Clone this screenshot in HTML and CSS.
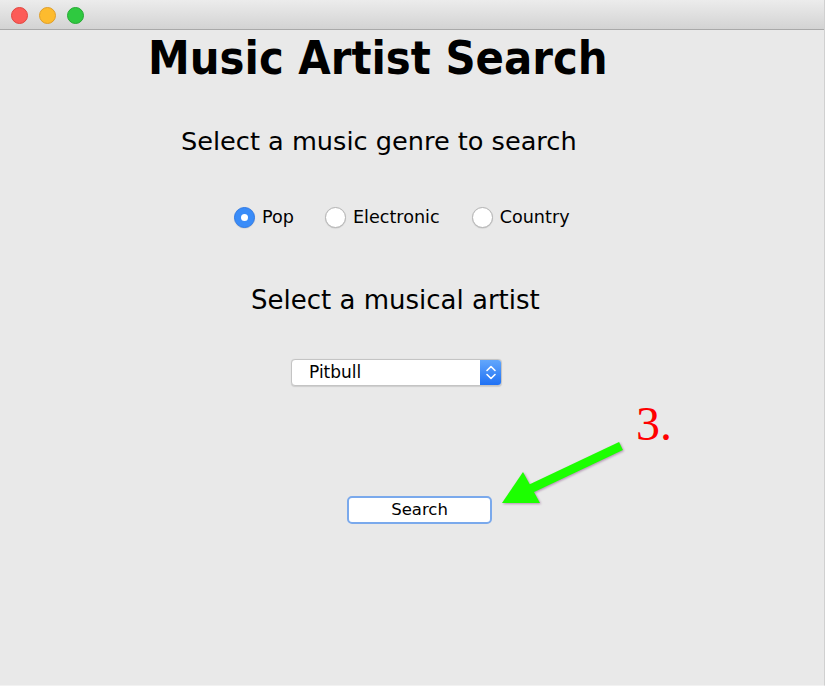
FILE: index.html
```html
<!DOCTYPE html>
<html lang="en">
<head>
<meta charset="utf-8">
<title>Music Artist Search</title>
<link rel="stylesheet" href="styles.css">
</head>
<body>
<div class="window">
  <div class="titlebar">
    <span class="light red"></span>
    <span class="light yellow"></span>
    <span class="light green"></span>
  </div>
  <div class="content">
    <div class="row title-row"><h1 class="title">Music Artist Search</h1></div>
    <div class="row genre-row"><p class="label">Select a music genre to search</p></div>
    <div class="row radio-row">
      <label class="radio"><span class="dot checked"></span><span class="rtext">Pop</span></label>
      <label class="radio"><span class="dot"></span><span class="rtext">Electronic</span></label>
      <label class="radio"><span class="dot"></span><span class="rtext">Country</span></label>
    </div>
    <div class="row artist-row"><p class="label">Select a musical artist</p></div>
    <div class="row combo-row">
      <div class="combo">
        <span class="combo-text">Pitbull</span>
        <span class="combo-btn">
          <svg width="22" height="27" viewBox="0 0 22 27"><path d="M7 11.5 L11 7.5 L15 11.5 M7 15.5 L11 19.5 L15 15.5" fill="none" stroke="#fff" stroke-width="1.6" stroke-linecap="round" stroke-linejoin="round"/></svg>
        </span>
      </div>
    </div>
    <div class="row button-row"><button class="search-btn">Search</button></div>
  </div>
  <svg class="arrow" width="825" height="686" viewBox="0 0 825 686">
    <g class="arrow-g">
      <line x1="621" y1="446" x2="528" y2="490" stroke="#1cff00" stroke-width="9"/>
      <polygon points="502,503 523,472 540,503" fill="#1cff00"/>
    </g>
  </svg>
  <div class="step">3.</div>
</div>
</body>
</html>
```
FILE: styles.css
```css
html, body {
  margin: 0;
  padding: 0;
}
body {
  width: 825px;
  height: 686px;
  overflow: hidden;
  background: #e8e8e8;
  font-family: "DejaVu Sans", "Noto Sans", sans-serif;
  color: #000;
}
.window {
  position: relative;
  width: 824px;
  height: 685px;
  border-right: 1px solid #d0d0d0;
  border-bottom: 1px solid #f2f2f2;
  background: #e9e9e9;
}
.titlebar {
  height: 29px;
  border-bottom: 1px solid #a9a9a9;
  background: linear-gradient(#ececec, #d3d3d3);
  display: flex;
  align-items: center;
  gap: 11px;
  padding-left: 11px;
  box-sizing: content-box;
}
.light {
  width: 15px;
  height: 15px;
  border-radius: 50%;
  display: block;
  margin-top: 1px;
}
.red { background: #fc5b57; border: 1px solid #e1463f; }
.yellow { background: #fdbb2e; border: 1px solid #df9e2a; }
.green { background: #2fc940; border: 1px solid #25a934; }

.content {
  display: flex;
  flex-direction: column;
}
.row {
  display: flex;
  align-items: center;
}
.title-row { margin-top: 5px; padding-left: 148px; }
.title {
  margin: 0;
  font-family: "DejaVu Sans Condensed", "DejaVu Sans", sans-serif;
  font-weight: bold;
  font-size: 46.6px;
  line-height: 46px;
  white-space: nowrap;
}
.label {
  margin: 0;
  font-size: 26px;
  line-height: 26px;
  white-space: nowrap;
}
.genre-row { margin-top: 47px; padding-left: 181px; }
.genre-row .label { font-size: 25.6px; }
.radio-row { margin-top: 52px; padding-left: 234px; height: 22px; }
.radio {
  display: flex;
  align-items: center;
  gap: 7px;
  margin-right: 31px;
}
.radio:nth-child(2) { margin-right: 32px; }
.radio:last-child { margin-right: 0; }
.dot {
  box-sizing: border-box;
  width: 21px;
  height: 21px;
  border-radius: 50%;
  background: #fff;
  border: 1px solid #b4b4b4;
  box-shadow: 0 0.5px 1px rgba(0,0,0,0.15);
  display: flex;
  align-items: center;
  justify-content: center;
}
.dot.checked {
  background: #3a8cf8;
  border-color: #2f7be8;
}
.dot.checked::after {
  content: "";
  width: 7px;
  height: 7px;
  border-radius: 50%;
  background: #fff;
}
.rtext {
  font-size: 17.6px;
  line-height: 20px;
}
.artist-row { margin-top: 59px; padding-left: 251px; }
.combo-row { margin-top: 46px; padding-left: 291px; }
.combo {
  box-sizing: border-box;
  width: 211px;
  height: 27px;
  display: flex;
  align-items: center;
  background: #fff;
  border: 1px solid #c4c4c4;
  border-radius: 4px;
  box-shadow: 0 0.5px 1px rgba(0,0,0,0.12);
  overflow: hidden;
}
.combo-text {
  flex: 1;
  padding-left: 17px;
  font-size: 17px;
  line-height: 25px;
}
.combo-btn {
  width: 22px;
  height: 27px;
  margin-right: -1px;
  display: flex;
  background: linear-gradient(#65a9fc, #1d6ff4);
}
.button-row { margin-top: 110px; padding-left: 347px; }
.search-btn {
  box-sizing: border-box;
  width: 145px;
  height: 28px;
  margin: 0;
  padding: 0;
  background: #fff;
  border: 2px solid #7aa9ec;
  border-radius: 5px;
  font-family: "DejaVu Sans", sans-serif;
  font-size: 16.5px;
  color: #000;
  line-height: 24px;
}
.arrow {
  position: absolute;
  left: 0;
  top: 0;
  pointer-events: none;
}
.arrow-g {
  filter: drop-shadow(1px 1px 1px rgba(110, 40, 110, 0.45));
}
.step {
  position: absolute;
  left: 636px;
  top: 400px;
  font-family: "Liberation Serif", serif;
  font-size: 48px;
  line-height: 48px;
  color: #ff0000;
}
```
